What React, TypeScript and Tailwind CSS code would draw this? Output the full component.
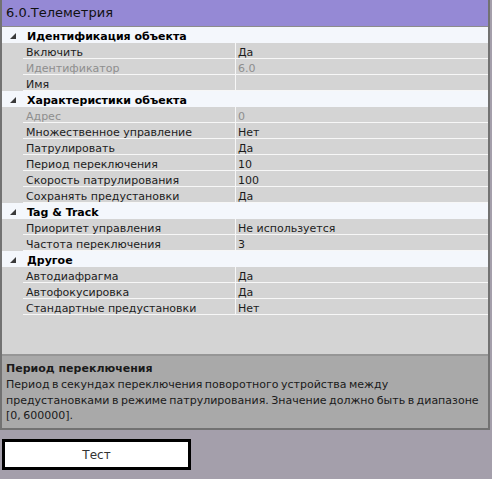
import React from "react";

type Row =
  | { kind: "group"; label: string }
  | { kind: "prop"; label: string; value: string; disabled?: boolean };

const ROWS: Row[] = [
  { kind: "group", label: "Идентификация объекта" },
  { kind: "prop", label: "Включить", value: "Да" },
  { kind: "prop", label: "Идентификатор", value: "6.0", disabled: true },
  { kind: "prop", label: "Имя", value: "" },
  { kind: "group", label: "Характеристики объекта" },
  { kind: "prop", label: "Адрес", value: "0", disabled: true },
  { kind: "prop", label: "Множественное управление", value: "Нет" },
  { kind: "prop", label: "Патрулировать", value: "Да" },
  { kind: "prop", label: "Период переключения", value: "10" },
  { kind: "prop", label: "Скорость патрулирования", value: "100" },
  { kind: "prop", label: "Сохранять предустановки", value: "Да" },
  { kind: "group", label: "Tag & Track" },
  { kind: "prop", label: "Приоритет управления", value: "Не используется" },
  { kind: "prop", label: "Частота переключения", value: "3" },
  { kind: "group", label: "Другое" },
  { kind: "prop", label: "Автодиафрагма", value: "Да" },
  { kind: "prop", label: "Автофокусировка", value: "Да" },
  { kind: "prop", label: "Стандартные предустановки", value: "Нет" },
];

function Expander() {
  return (
    <svg width="6" height="6" viewBox="0 0 6 6" className="shrink-0">
      <polygon points="6,0 6,6 0,6" fill="#3a3a3a" />
    </svg>
  );
}

function GroupRow({ label }: { label: string }) {
  return (
    <div className="flex h-4 items-center bg-[#f4f7fc] pt-[2px]">
      <div className="flex w-[21px] justify-end pr-[7px]">
        <Expander />
      </div>
      <span className="pl-[4px] text-[11px] font-bold leading-none text-black">
        {label}
      </span>
    </div>
  );
}

function PropRow({ label, value, disabled }: { label: string; value: string; disabled?: boolean }) {
  const tone = disabled ? "text-[#8e8e8e]" : "text-[#1c1c1c]";
  return (
    <div className="flex h-4">
      <div className="w-[21px] shrink-0" />
      <div
        className={
          "flex w-[213px] shrink-0 items-center border-r border-b border-[#f7f7f7] pl-[3px] pt-[3px] text-[11px] leading-none " +
          tone
        }
      >
        {label}
      </div>
      <div
        className={
          "flex flex-1 items-center border-b border-[#f7f7f7] pl-[2px] pt-[3px] text-[11px] leading-none " +
          tone
        }
      >
        {value}
      </div>
    </div>
  );
}

export default function App() {
  return (
    <div className="h-[479px] w-[492px] overflow-hidden bg-[#a49fab] font-['DejaVu_Sans',sans-serif]">
      <div className="flex h-[430px] w-[490px] flex-col border-x-2 border-b-2 border-[#727272]">
        <div className="flex h-[27px] shrink-0 items-center border-b border-[#8c8c8c] bg-[#9589d5] pl-[4px] text-[13px] text-[#111]">
          6.0.Телеметрия
        </div>

        <div className="flex-1 bg-[#d4d4d4]">
          {ROWS.map((r, i) =>
            r.kind === "group" ? (
              <GroupRow key={i} label={r.label} />
            ) : (
              <PropRow key={i} label={r.label} value={r.value} disabled={r.disabled} />
            )
          )}
        </div>

        <div className="h-[74px] shrink-0 border-t-2 border-[#969696] bg-[#a9a9a9] pl-[4px] pt-[5px] text-[11px] leading-[15.5px] text-[#1a1a1a] [word-spacing:-1px]">
          <div className="font-bold leading-[16px] [word-spacing:0px]">Период переключения</div>
          <div>
            Период в секундах переключения поворотного устройства между
            предустановками в режиме патрулирования. Значение должно быть в диапазоне
            [0, 600000].
          </div>
        </div>
      </div>

      <div className="ml-[2px] mt-[9px] flex h-[31px] w-[189px] items-center justify-center border-[3px] border-black bg-white text-[12px] text-[#333]">
        Тест
      </div>
    </div>
  );
}
